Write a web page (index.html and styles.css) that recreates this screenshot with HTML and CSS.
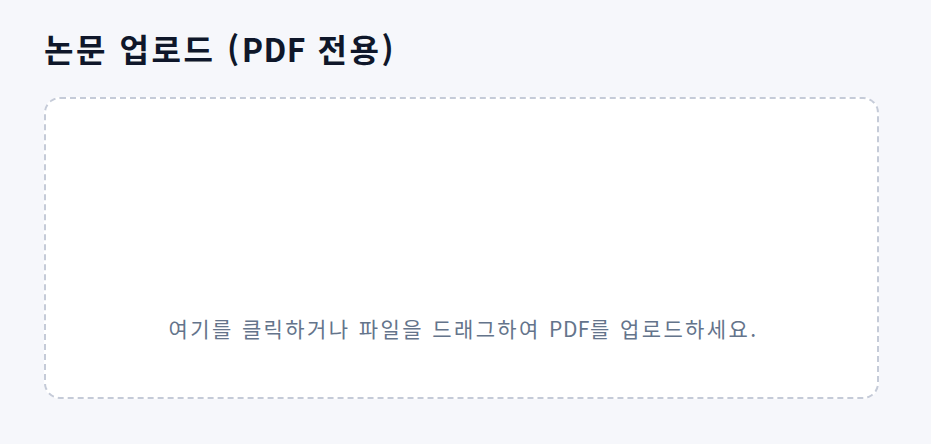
FILE: index.html
```html
<!DOCTYPE html>
<html lang="ko">
<head>
<meta charset="utf-8">
<link rel="stylesheet" href="styles.css">
</head>
<body>
<main class="page">
  <h1 class="title">논문 업로드 (<span class="latin">PDF</span> 전용)</h1>
  <div class="dropzone">
    <div class="icon-space"></div>
    <p class="hint">여기를 클릭하거나 파일을 드래그하여 <span class="latin">PDF</span>를 업로드하세요.</p>
  </div>
</main>
</body>
</html>
```
FILE: styles.css
```css
html, body {
  margin: 0;
  padding: 0;
  background: #f6f7fb;
}
body {
  font-family: "Noto Sans CJK KR", "Noto Sans", sans-serif;
}
.page {
  padding: 24px 0 0 44px;
  width: 835px;
}
.title {
  margin: 0 0 25px 0;
  font-size: 32px;
  letter-spacing: 2.55px;
  line-height: 48px;
  font-weight: 700;
  color: #0f172a;
}
.latin {
  letter-spacing: 0.5px;
}
.dropzone {
  box-sizing: border-box;
  height: 302px;
  border: 2px dashed #c5cbd8;
  border-radius: 16px;
  background: #ffffff;
  display: flex;
  flex-direction: column;
  align-items: center;
  justify-content: flex-end;
  padding-bottom: 54px;
}
.hint {
  margin: 0 0 0 4px;
  font-size: 21px;
  letter-spacing: 2.4px;
  line-height: 30px;
  color: #64748b;
}
```
